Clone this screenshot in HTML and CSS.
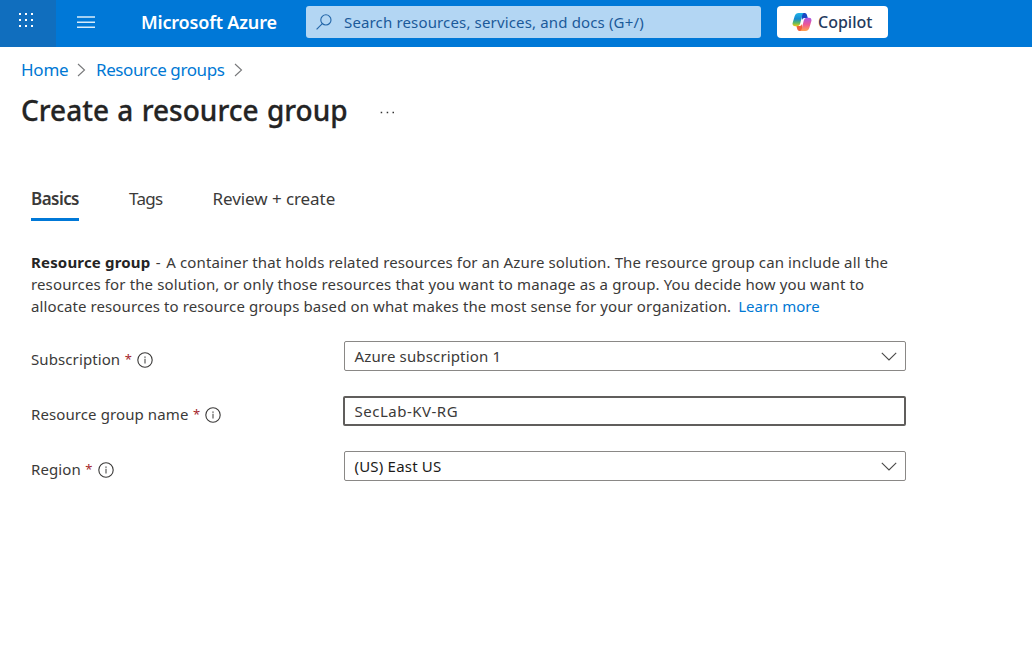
FILE: index.html
```html
<!DOCTYPE html>
<html lang="en">
<head>
<meta charset="utf-8">
<title>Create a resource group - Microsoft Azure</title>
<link rel="stylesheet" href="styles.css">
</head>
<body>
<header class="topbar">
  <button class="launcher" aria-label="App launcher">
    <svg width="16" height="16" viewBox="0 0 16 16" fill="#fff"><path d="M1 1h2v2H1zM7 1h2v2H7zM13 1h2v2h-2zM1 7h2v2H1zM7 7h2v2H7zM13 7h2v2h-2zM1 13h2v2H1zM7 13h2v2H7zM13 13h2v2h-2z"/></svg>
  </button>
  <button class="menu" aria-label="Menu">
    <svg width="18" height="12" viewBox="0 0 18 12" stroke="#d8ebfa" stroke-width="1.5"><path d="M0 .9h18M0 6.300h18M0 11.300h18"/></svg>
  </button>
  <span class="brand">Microsoft Azure</span>
  <div class="search">
    <svg width="16" height="16" viewBox="0 0 16 16" fill="none" stroke="#2366a8" stroke-width="1.1"><circle cx="9.9" cy="5.9" r="5.1"/><path d="M6.3 9.6.6 15.3"/></svg>
    <span class="search-text">Search resources, services, and docs (G+/)</span>
  </div>
  <button class="copilot">
    <svg width="20" height="18" viewBox="0 0 20 18">
      <defs>
        <linearGradient id="cool" x1="0" y1="0" x2="0" y2="1"><stop offset="0" stop-color="#1fb4e8"/><stop offset=".45" stop-color="#1689d0"/><stop offset=".75" stop-color="#5dbb63"/><stop offset="1" stop-color="#f2c811"/></linearGradient>
        <linearGradient id="warm" x1="0" y1="0" x2="0" y2="1"><stop offset="0" stop-color="#a757e8"/><stop offset=".5" stop-color="#ee5796"/><stop offset="1" stop-color="#ffa34d"/></linearGradient>
      </defs>
      <path fill="#1748c4" d="M9 0h3.800q1.600 0 2.100 1.700L15.800 5h-3.500q-1.700 0-2.300 2z"/>
      <path fill="#f0603c" d="M11 18H7.400q-1.600 0-2.100-1.700L4.400 13h3.300q1.700 0 2.300-2z"/>
      <path fill="url(#cool)" d="M6.600 0h5.200Q10.700.3 10.300 2L8.300 10.200Q7.500 13.200 4.900 13.200H2.900Q-.2 13.200.7 9.700L2.700 3Q3.700 0 6.600 0z"/>
      <path fill="url(#warm)" d="M13.400 18H8.200q1.100-.3 1.500-2L11.700 7.800Q12.500 4.800 15.100 4.800h2q3.100 0 2.200 3.500L17.300 15q-1 3-3.900 3z"/>
    </svg>
    <span class="copilot-text">Copilot</span>
  </button>
</header>

<nav class="crumbs">
  <a class="crumb-home">Home</a>
  <svg width="9" height="14" viewBox="0 0 9 14" fill="none" stroke="#77787a" stroke-width="1.1"><path d="M1 1l6.500 6L1 13"/></svg>
  <a class="crumb-groups">Resource groups</a>
  <svg width="9" height="14" viewBox="0 0 9 14" fill="none" stroke="#77787a" stroke-width="1.1"><path d="M1 1l6.500 6L1 13"/></svg>
</nav>

<div class="title-row">
  <h1 class="title">Create a resource group</h1>
  <svg class="more" width="15" height="3" viewBox="0 0 15 3" fill="#333"><path d="M.7.800h1.500v1.500H.7zM6.700.800h1.500v1.500H6.700zM12.500.800H14v1.500h-1.500z"/></svg>
</div>

<main class="content">
  <div class="tabs">
    <span class="tab tab-active">Basics</span>
    <span class="tab tab-tags">Tags</span>
    <span class="tab tab-review">Review + create</span>
  </div>

  <p class="intro">
    <span class="line line-1"><b class="term">Resource group</b><span class="dash">-</span>A container that holds related resources for an Azure solution. The resource group can include all the</span>
    <span class="line line-2">resources for the solution, or only those resources that you want to manage as a group. You decide how you want to</span>
    <span class="line line-3">allocate resources to resource groups based on what makes the most sense for your organization. <a class="learn">Learn more</a></span>
  </p>

  <div class="form">
    <div class="row">
      <div class="label"><span class="label-text">Subscription</span><span class="star">*</span>
        <svg width="16" height="16" viewBox="0 0 16 16"><circle cx="8" cy="8" r="7.200" fill="none" stroke="#3b3a39" stroke-width="1.100"/><path fill="#3b3a39" d="M7.400 4.400h1.200v1.300H7.400zM7.500 6.800h1v4.700h-1z"/></svg>
      </div>
      <div class="field"><span class="value-sub">Azure subscription 1</span>
        <svg width="16" height="9" viewBox="0 0 16 9" fill="none" stroke="#4a4948" stroke-width="1.100"><path d="M.8.8 8 8 15.200.8"/></svg></div>
    </div>
    <div class="row">
      <div class="label"><span class="label-text">Resource group name</span><span class="star">*</span>
        <svg width="16" height="16" viewBox="0 0 16 16"><circle cx="8" cy="8" r="7.200" fill="none" stroke="#3b3a39" stroke-width="1.100"/><path fill="#3b3a39" d="M7.400 4.400h1.200v1.300H7.400zM7.500 6.800h1v4.700h-1z"/></svg>
      </div>
      <div class="field field-focus"><span class="value-name">SecLab-KV-RG</span></div>
    </div>
    <div class="row">
      <div class="label"><span class="label-text">Region</span><span class="star">*</span>
        <svg width="16" height="16" viewBox="0 0 16 16"><circle cx="8" cy="8" r="7.200" fill="none" stroke="#3b3a39" stroke-width="1.100"/><path fill="#3b3a39" d="M7.400 4.400h1.200v1.300H7.400zM7.500 6.800h1v4.700h-1z"/></svg>
      </div>
      <div class="field field-dark"><span class="value-region">(US) East US</span>
        <svg width="16" height="9" viewBox="0 0 16 9" fill="none" stroke="#4a4948" stroke-width="1.100"><path d="M.8.8 8 8 15.200.8"/></svg></div>
    </div>
  </div>
</main>
</body>
</html>
```
FILE: styles.css
```css
* { box-sizing: border-box; }
body { margin: 0; background: #fff; color: #3b3a39; font-family: "Noto Sans", "Open Sans", sans-serif; font-size: 15px; white-space: nowrap; }
button { border: 0; padding: 0; font: inherit; }
svg { display: block; flex: none; }

.topbar { display: flex; height: 47px; background: #0078d7; align-items: flex-start; }
.launcher { display: flex; align-items: flex-start; width: 56px; height: 47px; background: #106ebe; padding: 12px 0 0 18px; }
.menu { display: flex; align-items: flex-start; width: 60px; height: 47px; background: none; padding: 16px 0 0 21px; }
.brand { width: 190px; padding-left: 25px; line-height: 45px; font-size: 18px; font-weight: 600; letter-spacing: -.17px; color: #fff; }
.search { display: flex; align-items: center; gap: 12px; width: 455px; height: 32px; margin-top: 6px; padding-left: 10px; background: #b3d6f3; border-radius: 3px; color: #1b5a9a; letter-spacing: .15px; }
.copilot { display: flex; align-items: center; gap: 6px; width: 111px; height: 32px; margin: 6px 0 0 16px; padding-left: 15px; background: #fff; border-radius: 4px; color: #243a5e; font-size: 16px; font-weight: 500; }

.crumbs { display: flex; align-items: center; height: 46px; padding-left: 21px; font-size: 17px; color: #0078d4; }
.crumbs a { padding-bottom: 2px; }
.crumb-home { width: 56px; letter-spacing: -.25px; }
.crumb-groups { width: 138px; margin-left: 10px; letter-spacing: -.4px; }

.title-row { display: flex; height: 36px; padding-left: 21px; align-items: center; }
.title { width: 359px; margin: 0; font-size: 28px; font-weight: 500; line-height: 34px; padding-bottom: 3px; letter-spacing: .02px; word-spacing: 1px; color: #242424; -webkit-text-stroke: .3px #242424; }
.more { margin-top: 2px; }

.content { padding: 53px 0 0 31px; }
.tabs { display: flex; gap: 50px; height: 39px; font-size: 17px; line-height: 34px; }
.tab-active { width: 48px; border-bottom: 3px solid #0078d7; font-weight: 600; letter-spacing: -.55px; }
.tab-tags { width: 33.5px; letter-spacing: -.7px; }
.tab-review { letter-spacing: -.07px; }

.intro { margin: 30px 0 0; line-height: 22px; }
.line { display: block; }
.line-1 { letter-spacing: .12px; }
.line-2 { letter-spacing: .13px; }
.line-3 { letter-spacing: .1px; }
.term { font-weight: 700; letter-spacing: .17px; color: #242424; }
.dash { margin: 0 5.5px; }
.learn { margin-left: 3px; letter-spacing: 0; color: #0078d4; }

.form { display: grid; gap: 25px; margin-top: 24px; }
.row { display: grid; grid-template-columns: 312px 563px; height: 30px; }
.label { display: flex; align-items: center; padding-top: 7px; }
.label-text { padding-bottom: 2px; letter-spacing: .1px; }
.star { margin: 0 5px 0 4.5px; font-size: 13px; line-height: 20px; padding-bottom: 2px; color: #a4262c; }
.field { display: flex; align-items: center; justify-content: space-between; margin-left: 1px; padding: 0 8.5px 0 9.5px; border: 1px solid #8a8886; border-radius: 2px; }
.field-focus { margin-left: 0; border: 2px solid #605e5c; }
.field-dark { color: #1b1a19; }
.value-sub { letter-spacing: .15px; }
.value-name { letter-spacing: .5px; }
.value-region { letter-spacing: .2px; }
```
